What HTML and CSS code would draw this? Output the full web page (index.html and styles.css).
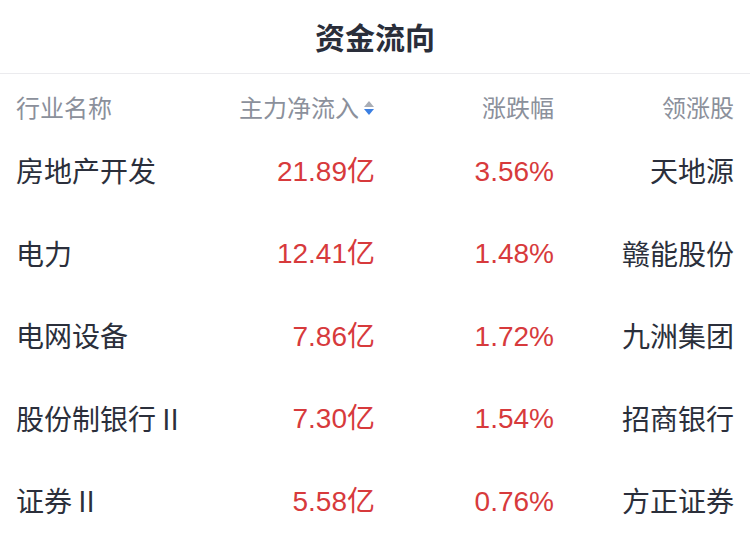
FILE: index.html
```html
<!DOCTYPE html>
<html lang="zh">
<head>
<meta charset="utf-8">
<title>资金流向</title>
<link rel="stylesheet" href="styles.css">
</head>
<body>
<div class="panel">
  <div class="title">资金流向</div>
  <div class="table">
    <div class="row head">
      <div class="c1">行业名称</div>
      <div class="c2">主力净流入<span class="sort"><span class="up"></span><span class="down"></span></span></div>
      <div class="c3">涨跌幅</div>
      <div class="c4">领涨股</div>
    </div>
    <div class="row">
      <div class="c1">房地产开发</div>
      <div class="c2 red"><span class="d">21.89</span>亿</div>
      <div class="c3 red"><span class="d">3.56%</span></div>
      <div class="c4">天地源</div>
    </div>
    <div class="row">
      <div class="c1">电力</div>
      <div class="c2 red"><span class="d">12.41</span>亿</div>
      <div class="c3 red"><span class="d">1.48%</span></div>
      <div class="c4">赣能股份</div>
    </div>
    <div class="row">
      <div class="c1">电网设备</div>
      <div class="c2 red"><span class="d">7.86</span>亿</div>
      <div class="c3 red"><span class="d">1.72%</span></div>
      <div class="c4">九洲集团</div>
    </div>
    <div class="row">
      <div class="c1">股份制银行 II</div>
      <div class="c2 red"><span class="d">7.30</span>亿</div>
      <div class="c3 red"><span class="d">1.54%</span></div>
      <div class="c4">招商银行</div>
    </div>
    <div class="row">
      <div class="c1">证券 II</div>
      <div class="c2 red"><span class="d">5.58</span>亿</div>
      <div class="c3 red"><span class="d">0.76%</span></div>
      <div class="c4">方正证券</div>
    </div>
  </div>
</div>
</body>
</html>
```

FILE: styles.css
```css
html, body {
  margin: 0;
  padding: 0;
  background: #ffffff;
}
body {
  font-family: "Noto Sans CJK SC", "Noto Sans", sans-serif;
  color: #2b2f3b;
}
.panel {
  width: 750px;
}
.title {
  height: 73px;
  line-height: 72px;
  text-align: center;
  font-size: 30px;
  font-weight: 700;
  color: #2a2e3a;
  border-bottom: 1px solid #ebebee;
}
.table {
  padding: 0 16px;
}
.row {
  display: grid;
  grid-template-columns: 184px 175px 179px 180px;
  align-items: center;
  height: 82.5px;
  font-size: 28px;
  line-height: 40px;
}
.row.head {
  height: auto;
  padding: 16px 0 5px;
  line-height: 34px;
  font-size: 24px;
  color: #8b909b;
}
.c2, .c3, .c4 {
  text-align: right;
}
.head .c2 {
  display: flex;
  justify-content: flex-end;
  align-items: center;
}
.sort {
  display: inline-flex;
  flex-direction: column;
  gap: 2px;
  margin-left: 5px;
  margin-right: 1px;
  margin-top: 1px;
}
.sort .up {
  width: 0;
  height: 0;
  border-left: 5.5px solid transparent;
  border-right: 5.5px solid transparent;
  border-bottom: 6px solid #a9adb5;
}
.sort .down {
  width: 0;
  height: 0;
  border-left: 5.5px solid transparent;
  border-right: 5.5px solid transparent;
  border-top: 6px solid #3b7fe2;
}
.red {
  color: #d73a3c;
}
.d {
  font-family: "Liberation Sans", sans-serif;
}
```
